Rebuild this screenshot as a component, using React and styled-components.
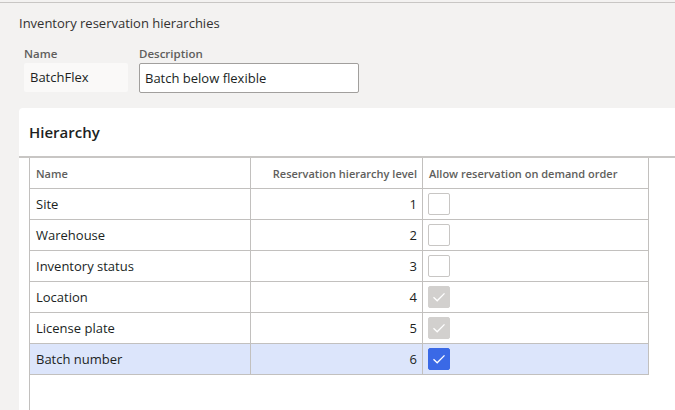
import React from "react";
import styled, { createGlobalStyle } from "styled-components";

const GlobalStyle = createGlobalStyle`
  html, body { margin: 0; padding: 0; height: 100%; }
  body {
    background: #f3f2f1;
    font-family: "Open Sans", "Noto Sans", Arial, sans-serif;
    color: #323130;
  }
  #root { height: 100%; }
`;

const Page = styled.div`
  box-sizing: border-box;
  height: 100%;
  margin-top: 2px;
  border-top: 1px solid #c8c6c4;
  display: flex;
  flex-direction: column;
  overflow: hidden;
`;

const Title = styled.div`
  padding: 10px 0 0 19px;
  font-size: 13px;
  line-height: 20px;
  color: #323130;
`;

const Fields = styled.div`
  display: flex;
  gap: 11px;
  padding: 13px 0 0 24px;
`;

const Field = styled.div`
  display: flex;
  flex-direction: column;
`;

const Label = styled.div`
  font-size: 11.5px;
  font-weight: 600;
  color: #605e5c;
  line-height: 16px;
  margin-bottom: 1px;
`;

const ReadOnlyValue = styled.div`
  box-sizing: border-box;
  width: 104px;
  height: 29px;
  background: #faf9f8;
  border-radius: 2px;
  padding: 0 6px;
  font-size: 13px;
  line-height: 29px;
  color: #201f1e;
`;

const Input = styled.div`
  box-sizing: border-box;
  width: 220px;
  height: 30px;
  background: #ffffff;
  border: 1px solid #a19f9d;
  border-radius: 2px;
  padding: 0 5px;
  font-size: 13px;
  line-height: 28px;
  color: #201f1e;
`;

const Card = styled.div`
  flex: 1;
  margin: 15px 0 0 19px;
  background: #ffffff;
  border-top-left-radius: 4px;
  display: flex;
  flex-direction: column;
`;

const CardHeader = styled.div`
  box-sizing: border-box;
  height: 50px;
  padding: 0 0 0 10px;
  border-bottom: 2px solid #c8c6c4;
  display: flex;
  align-items: center;
  font-size: 15px;
  font-weight: 600;
  color: #201f1e;
`;

const GridWrap = styled.div`
  flex: 1;
  margin-left: 10px;
  border-left: 1px solid #c2c0be;
`;

const Grid = styled.div`
  display: grid;
  grid-template-columns: 221px 172px 226px;
`;

const Cell = styled.div`
  box-sizing: border-box;
  height: 31px;
  border-right: 1px solid #c2c0be;
  border-bottom: 1px solid #c2c0be;
  background: ${(p) => (p.$selected ? "#dce5fb" : "#ffffff")};
  display: flex;
  align-items: center;
  justify-content: ${(p) => (p.$right ? "flex-end" : "flex-start")};
  padding: ${(p) => (p.$right ? "0 5px 0 6px" : "0 6px")};
  font-size: ${(p) => (p.$head ? "11px" : "13px")};
  font-weight: ${(p) => (p.$head ? 600 : 400)};
  color: ${(p) => (p.$head ? "#605e5c" : "#201f1e")};
  white-space: nowrap;
  overflow: hidden;
`;

const CheckCell = styled(Cell)`
  padding: 0 0 0 5px;
`;

const Box = styled.div`
  box-sizing: border-box;
  width: 22px;
  height: 22px;
  border-radius: 2px;
  border: 1px solid
    ${(p) =>
      p.$state === "on" ? "#3a69e6" : p.$state === "disabled" ? "#d2d0ce" : "#c8c6c4"};
  background: ${(p) =>
    p.$state === "on" ? "#3a69e6" : p.$state === "disabled" ? "#d2d0ce" : "#ffffff"};
  display: flex;
  align-items: center;
  justify-content: center;
`;

const Check = () => (
  <svg width="14" height="14" viewBox="0 0 14 14">
    <path d="M1.5 7.3 L5.2 10.8 L12.5 3.4" fill="none" stroke="#ffffff" strokeWidth="1.3" />
  </svg>
);

const rows = [
  { name: "Site", level: 1, state: "off" },
  { name: "Warehouse", level: 2, state: "off" },
  { name: "Inventory status", level: 3, state: "off" },
  { name: "Location", level: 4, state: "disabled" },
  { name: "License plate", level: 5, state: "disabled" },
  { name: "Batch number", level: 6, state: "on", selected: true },
];

export default function App() {
  return (
    <>
      <GlobalStyle />
      <Page>
        <Title>Inventory reservation hierarchies</Title>
        <Fields>
          <Field>
            <Label>Name</Label>
            <ReadOnlyValue>BatchFlex</ReadOnlyValue>
          </Field>
          <Field>
            <Label>Description</Label>
            <Input>Batch below flexible</Input>
          </Field>
        </Fields>
        <Card>
          <CardHeader>Hierarchy</CardHeader>
          <GridWrap>
            <Grid>
              <Cell $head>Name</Cell>
              <Cell $head $right>Reservation hierarchy level</Cell>
              <Cell $head>Allow reservation on demand order</Cell>
              {rows.map((r) => (
                <React.Fragment key={r.name}>
                  <Cell $selected={r.selected}>{r.name}</Cell>
                  <Cell $selected={r.selected} $right>{r.level}</Cell>
                  <CheckCell $selected={r.selected}>
                    <Box $state={r.state}>{r.state !== "off" && <Check />}</Box>
                  </CheckCell>
                </React.Fragment>
              ))}
            </Grid>
          </GridWrap>
        </Card>
      </Page>
    </>
  );
}
